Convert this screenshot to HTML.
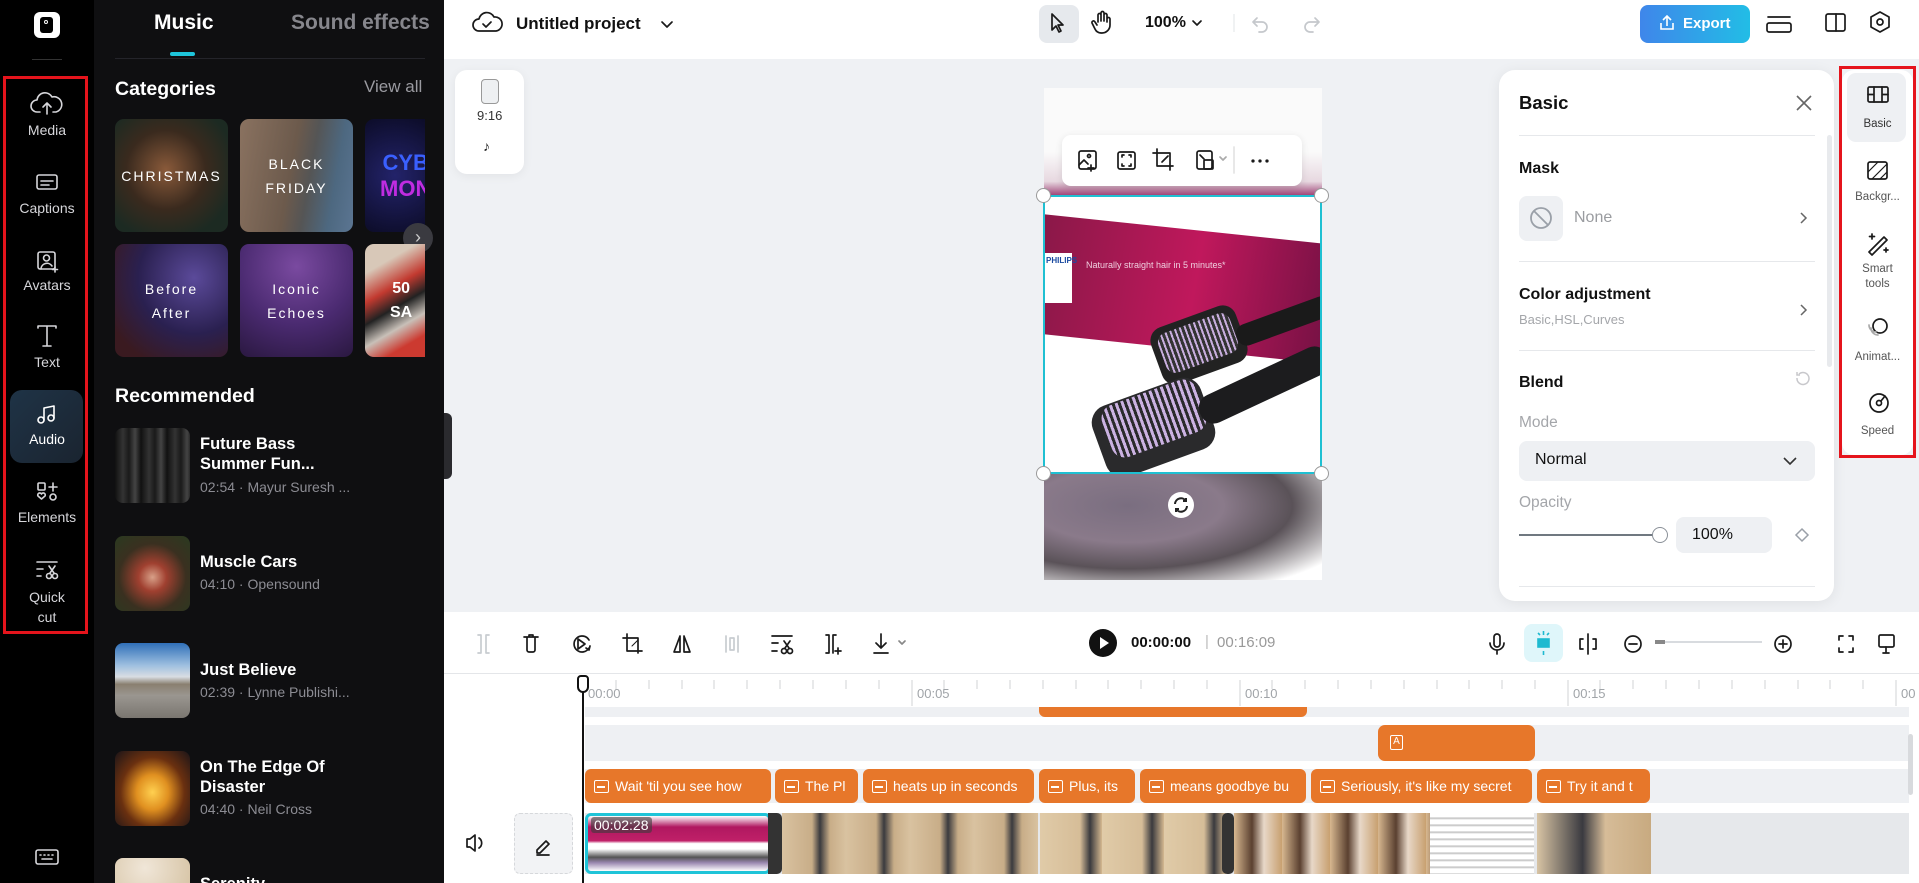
<!DOCTYPE html>
<html style="width:1919px;height:883px;overflow:hidden"><head><meta charset="utf-8">
<style>
*{margin:0;padding:0;box-sizing:border-box}
body{width:1919px;height:883px;overflow:hidden;position:relative;font-family:"Liberation Sans",sans-serif;background:#eff1f4}
.a{position:absolute}
svg{position:absolute;overflow:visible}
.ri{position:absolute;left:0;width:94px;text-align:center;color:#d6d6da;font-size:14px}
.tile{position:absolute;border-radius:9px;overflow:hidden;color:#fff;font-size:14px;letter-spacing:2px;display:flex;align-items:center;justify-content:center;text-align:center;line-height:24px}
.th{position:absolute;left:115px;width:75px;height:75px;border-radius:8px;overflow:hidden}
.tt{position:absolute;left:200px;color:#fff;font-size:16.5px;font-weight:bold;line-height:20px}
.tm{position:absolute;left:200px;color:#8c8c93;font-size:14px}
.pl{position:absolute;left:1519px;font-size:16px;font-weight:bold;color:#111}
.dv{position:absolute;left:1519px;width:296px;height:1px;background:#e6e8eb}
.tab{position:absolute;left:1842px;width:71px;text-align:center;font-size:11.5px;color:#333;line-height:15px}
.cap{position:absolute;top:769px;height:34px;background:#e7772a;border-radius:6px;color:#fff;font-size:14px;line-height:34px;white-space:nowrap;overflow:hidden;padding-left:30px}
.cap:before{content:"";position:absolute;left:9px;top:11px;width:13px;height:11px;border:1.5px solid #fff;border-radius:2px}
.cap:after{content:"";position:absolute;left:12px;top:17px;width:8px;height:1.5px;background:#fff}
.ic{stroke:#1a1a1a;fill:none;stroke-width:1.7;stroke-linecap:round;stroke-linejoin:round}
#clip{position:absolute;left:0;top:0;width:1919px;height:883px;overflow:hidden}
</style></head><body><div id="clip">

<!-- left rail -->
<div class="a" style="left:0;top:0;width:94px;height:883px;background:#000"></div>
<div class="a" style="left:34px;top:12px;width:26px;height:26px;background:#fff;border-radius:6px"></div>
<div class="a" style="left:40px;top:17px;width:13px;height:16px;background:#000;border-radius:3px"></div>
<div class="a" style="left:44px;top:20px;width:4px;height:4px;border:1px solid #fff;border-radius:50%"></div>
<div class="a" style="left:32px;top:59px;width:30px;height:1px;background:#333"></div>
<div class="a" style="left:10px;top:390px;width:73px;height:73px;border-radius:12px;background:linear-gradient(135deg,#1f3346,#1a2430)"></div>
<div class="a" style="left:3px;top:76px;width:85px;height:558px;border:3px solid #e5141c"></div>
<svg width="94" height="883" style="left:0;top:0">
 <g stroke="#d6d6da" fill="none" stroke-width="1.6" stroke-linecap="round" stroke-linejoin="round">
  <path d="M40 112h-3a6 6 0 0 1 0-12 8 8 0 0 1 15-3 6 6 0 0 1 4 15h-3M47 114v-10M43 107l4-4 4 4"/>
  <rect x="37" y="175" width="20" height="14" rx="2"/><path d="M41 181h12M41 185h8"/>
  <rect x="38" y="252" width="17" height="17" rx="2"/><circle cx="46.5" cy="258" r="3"/><path d="M41 269a6 6 0 0 1 11-3"/><path d="M55 267v5M52.5 269.5h5"/>
  <path d="M38 328v-2h18v2M47 326v20M43 346h8"/>
  <g stroke="#fff"><path d="M44 420v-12l10-2v12"/><circle cx="41" cy="420" r="3"/><circle cx="51" cy="418" r="3"/></g>
  <rect x="38" y="483" width="7" height="7" rx="1"/><path d="M53 483v8M49 487h8"/><path d="M41.5 499l-3.5-3a2 2 0 0 1 3.5-2 2 2 0 0 1 3.5 2z"/><circle cx="53" cy="497" r="3"/>
  <path d="M37 562h20M37 569h6M37 576h4"/><circle cx="49" cy="576" r="2.5"/><circle cx="55" cy="576" r="2.5"/><path d="M50 573l5-7M54 573l-5-7"/>
  <rect x="36" y="850" width="22" height="14" rx="2"/><path d="M40 855h1M44 855h1M48 855h1M52 855h1M42 859h10"/>
 </g>
</svg>
<div class="ri" style="top:122px">Media</div>
<div class="ri" style="top:200px">Captions</div>
<div class="ri" style="top:277px">Avatars</div>
<div class="ri" style="top:354px">Text</div>
<div class="ri" style="top:431px;color:#fff">Audio</div>
<div class="ri" style="top:509px">Elements</div>
<div class="ri" style="top:587px;line-height:20px">Quick<br>cut</div>

<!-- music panel -->
<div class="a" style="left:94px;top:0;width:350px;height:883px;background:#0f0f11;overflow:hidden">
<div class="a" style="left:60px;top:11px;font-size:21px;font-weight:bold;color:#fff">Music</div>
<div class="a" style="left:197px;top:11px;font-size:21px;font-weight:bold;color:#86868c">Sound effects</div>
<div class="a" style="left:76px;top:52px;width:25px;height:4px;background:#1ec5db;border-radius:2px"></div>
<div class="a" style="left:21px;top:58px;width:310px;height:1px;background:#24242a"></div>
</div>
<div class="a" style="left:115px;top:78px;font-size:19.5px;font-weight:bold;color:#fff">Categories</div>
<div class="a" style="left:364px;top:77px;font-size:17px;color:#9a9aa0">View all</div>

<div class="tile" style="left:115px;top:119px;width:113px;height:113px;background:radial-gradient(circle at 45% 45%,#8a5a3a,#3a2a1e 45%,#1c2a22 80%)">CHRISTMAS</div>
<div class="tile" style="left:240px;top:119px;width:113px;height:113px;background:linear-gradient(100deg,#8a7260 0%,#6c5a4c 45%,#555 60%,#4d6880 80%,#5b7592)">BLACK<br>FRIDAY</div>
<div class="tile" style="left:365px;top:119px;width:60px;height:113px;border-radius:9px 0 0 9px;background:radial-gradient(circle at 50% 50%,#23236a,#0c0c28);justify-content:flex-start;padding-left:15px;font-size:22px;letter-spacing:0;line-height:26px;font-weight:bold"><span><span style="color:#3a60ff">CYB</span><br><span style="color:#c02ce0">MON</span></span></div>
<div class="a" style="left:403px;top:223px;width:30px;height:30px;border-radius:50%;background:#3a3a40;color:#ccc;font-size:18px;text-align:center;line-height:28px">›</div>
<div class="tile" style="left:115px;top:244px;width:113px;height:113px;background:radial-gradient(circle at 70% 30%,#5b4a9a,#2a2050 50%,#3a1a20 85%)">Before<br>After</div>
<div class="tile" style="left:240px;top:244px;width:113px;height:113px;background:radial-gradient(circle at 50% 20%,#7a4aa0,#4a2a70 55%,#2a1840)">Iconic<br>Echoes</div>
<div class="tile" style="left:365px;top:244px;width:60px;height:113px;border-radius:9px 0 0 9px;background:linear-gradient(150deg,#d8c8b8 20%,#c23a30 40%,#222 55%,#c8c0b8 70%,#cc3a30 85%);justify-content:flex-start;padding-left:25px;font-weight:bold;font-size:16px;letter-spacing:0">50<br>SA</div>

<div class="a" style="left:115px;top:385px;font-size:19.5px;font-weight:bold;color:#fff">Recommended</div>
<div class="th" style="top:428px;background:repeating-linear-gradient(90deg,#111 0,#333 8px,#1a1a1a 14px,#444 20px,#111 26px)"></div>
<div class="tt" style="top:434px">Future Bass<br>Summer Fun...</div>
<div class="tm" style="top:479px">02:54 · Mayur Suresh ...</div>
<div class="th" style="top:536px;background:radial-gradient(circle at 50% 55%,#d8a088 0,#a04030 25%,#3a3020 60%,#2a3a20)"></div>
<div class="tt" style="top:552px">Muscle Cars</div>
<div class="tm" style="top:576px">04:10 · Opensound</div>
<div class="th" style="top:643px;background:linear-gradient(180deg,#2f6fb8 0%,#9fc0e0 30%,#d8dde2 45%,#8a8070 55%,#9a9690 70%,#7a7670)"></div>
<div class="tt" style="top:660px">Just Believe</div>
<div class="tm" style="top:684px">02:39 · Lynne Publishi...</div>
<div class="th" style="top:751px;background:radial-gradient(ellipse at 50% 55%,#ffd050 0,#e09020 30%,#6a3010 60%,#1a1418)"></div>
<div class="tt" style="top:757px">On The Edge Of<br>Disaster</div>
<div class="tm" style="top:801px">04:40 · Neil Cross</div>
<div class="th" style="top:858px;height:25px;border-radius:8px 8px 0 0;background:radial-gradient(circle at 40% 40%,#f0e6d8,#d8c6a8)"></div>
<div class="tt" style="top:874px;height:9px;overflow:hidden">Serenity</div>
<div class="a" style="left:444px;top:413px;width:8px;height:66px;background:#2a2a2e;border-radius:0 6px 6px 0"></div>

<!-- top bar -->
<div class="a" style="left:444px;top:0;width:1475px;height:59px;background:#fff"></div>
<div class="a" style="left:1039px;top:5px;width:40px;height:38px;border-radius:8px;background:#e6e9ed"></div>
<svg width="1919" height="59" style="left:0;top:0">
 <g class="ic">
  <path d="M481 31h-2a6 6 0 0 1 0-12 8 8 0 0 1 15-2 6 6 0 0 1 2 14h-14z"/><path d="M483 24l3 3 5-5"/>
  <path d="M662 22l5 5 5-5"/>
  <path d="M1052 14l0 16 4-4 3 6 2-1-3-6h5z"/>
  <path d="M1098 22v-7a1.5 1.5 0 0 1 3 0v6M1101 20v-7a1.5 1.5 0 0 1 3 0v8M1104 21v-6a1.5 1.5 0 0 1 3 0v7M1107 22v-3a1.5 1.5 0 0 1 3 0v6a8 8 0 0 1-8 8h-1a7 7 0 0 1-6-4l-3-6a1.5 1.5 0 0 1 3-1l2 3"/>
  <path d="M1193 21l4 4 4-4"/>
  <g stroke="#c5c8cc"><path d="M1257 18l-4 4 4 4M1253 22h9a5 5 0 0 1 0 10h-3"/><path d="M1315 18l4 4-4 4M1319 22h-9a5 5 0 0 0 0 10h3"/></g>
  <path d="M1768 17h22M1769 23h20a2 2 0 0 1 2 2v5a2 2 0 0 1-2 2h-20a2 2 0 0 1-2-2v-5a2 2 0 0 1 2-2z"/>
  <rect x="1826" y="14" width="19" height="17" rx="2"/><path d="M1836 14v17"/>
  <path d="M1880 12l9 5v10l-9 5-9-5v-10z"/><circle cx="1880" cy="22" r="3"/>
 </g>
 <line x1="1234" y1="14" x2="1234" y2="32" stroke="#e2e4e7"/>
</svg>
<div class="a" style="left:516px;top:14px;font-size:17px;font-weight:bold;color:#111">Untitled project</div>
<div class="a" style="left:1145px;top:14px;font-size:16px;font-weight:bold;color:#111">100%</div>
<div class="a" style="left:1640px;top:5px;width:110px;height:38px;border-radius:8px;background:linear-gradient(90deg,#3f86ea,#22bde6);color:#fff;font-weight:bold;font-size:15px;line-height:38px;padding-left:43px">Export</div>
<svg width="20" height="20" style="left:1658px;top:13px"><g stroke="#fff" fill="none" stroke-width="1.6"><path d="M3 10v6h12v-6M9 13V3M5 7l4-4 4 4"/></g></svg>

<!-- canvas -->
<div class="a" style="left:455px;top:70px;width:69px;height:104px;background:#fff;border-radius:12px;box-shadow:0 2px 10px rgba(0,0,0,.06)"></div>
<div class="a" style="left:481px;top:79px;width:18px;height:25px;border:1.5px solid #999;border-radius:4px;background:#eef0f2"></div>
<div class="a" style="left:477px;top:108px;font-size:13px;color:#333">9:16</div>
<div class="a" style="left:483px;top:138px;font-size:14px;color:#222">♪</div>

<div class="a" style="left:1044px;top:88px;width:278px;height:492px;background:linear-gradient(180deg,#fafafa 0,#fafafa 13%,#e7d8e0 19%,#9a3a70 22%,#fff 22%)"></div>
<div class="a" style="left:1044px;top:474px;width:278px;height:106px;background:radial-gradient(ellipse at 30% 30%,#7a6e80 0,#8a7a8a 35%,#5a5258 60%,#fff 90%)"></div>
<div class="a" style="left:1044px;top:195px;width:278px;height:279px;background:#fff;overflow:hidden">
 <div class="a" style="left:0;top:35px;width:300px;height:120px;background:linear-gradient(100deg,#8a1848,#c0185c 50%,#6a1040);transform:skewY(6deg)"></div>
 <div class="a" style="left:0;top:58px;width:28px;height:50px;background:#fff"></div>
 <div class="a" style="left:2px;top:61px;font-size:8px;font-weight:bold;color:#1a4aa0">PHILIPS</div>
 <div class="a" style="left:42px;top:65px;font-size:9px;color:#f0d0e0">Naturally straight hair in 5 minutes*</div>
 <div class="a" style="left:110px;top:120px;width:90px;height:60px;background:#222;border-radius:14px;transform:rotate(-20deg)"></div>
 <div class="a" style="left:116px;top:127px;width:76px;height:42px;background:repeating-linear-gradient(90deg,#c8aede 0,#c8aede 2px,#333 2px,#333 5px);border-radius:10px;transform:rotate(-20deg)"></div>
 <div class="a" style="left:190px;top:115px;width:100px;height:22px;background:#1a1a1a;border-radius:10px;transform:rotate(-20deg)"></div>
 <div class="a" style="left:52px;top:195px;width:115px;height:75px;background:#2a2a2c;border-radius:18px;transform:rotate(-20deg)"></div>
 <div class="a" style="left:60px;top:196px;width:100px;height:55px;background:repeating-linear-gradient(90deg,#cbb2e2 0,#cbb2e2 3px,#2a2a2c 3px,#2a2a2c 6px);border-radius:14px;transform:rotate(-20deg)"></div>
 <div class="a" style="left:150px;top:175px;width:140px;height:30px;background:#1c1c1e;border-radius:14px;transform:rotate(-25deg)"></div>
</div>
<div class="a" style="left:1043px;top:195px;width:279px;height:279px;border:2px solid #1fc0d2"></div>
<div class="a" style="left:1036px;top:188px;width:15px;height:15px;border-radius:50%;background:#fff;border:1px solid #999"></div>
<div class="a" style="left:1314px;top:188px;width:15px;height:15px;border-radius:50%;background:#fff;border:1px solid #999"></div>
<div class="a" style="left:1036px;top:466px;width:15px;height:15px;border-radius:50%;background:#fff;border:1px solid #999"></div>
<div class="a" style="left:1314px;top:466px;width:15px;height:15px;border-radius:50%;background:#fff;border:1px solid #999"></div>
<div class="a" style="left:1168px;top:492px;width:26px;height:26px;border-radius:50%;background:#fff"></div>
<svg width="26" height="26" style="left:1168px;top:492px"><g stroke="#222" fill="none" stroke-width="2"><path d="M7 12a6 6 0 0 1 11-3M19 14a6 6 0 0 1-11 3"/><path d="M18 6v3h-3M8 20v-3h3"/></g></svg>

<div class="a" style="left:1062px;top:135px;width:240px;height:51px;background:#fff;border-radius:9px;box-shadow:0 2px 8px rgba(0,0,0,.1)"></div>
<svg width="240" height="51" style="left:1062px;top:135px"><g class="ic">
 <rect x="17" y="16" width="17" height="18" rx="2"/><path d="M17 30l5-5 4 4M29 30v6M26 33h6"/><circle cx="27" cy="21" r="1.5"/>
 <rect x="56" y="17" width="17" height="17" rx="2"/><path d="M60 22v-2h2M69 22v-2h-2M60 29v2h2M69 29v2h-2"/>
 <path d="M95 14v17h16M91 18h17v17"/><path d="M100 27l6-6"/>
 <rect x="135" y="16" width="15" height="18" rx="2"/><rect x="142" y="25" width="9" height="9" rx="1"/><path d="M138 20l4 4"/>
 <path d="M158 22l3 3 3-3" stroke="#aaa"/>
 <line x1="172" y1="12" x2="172" y2="38" stroke="#e4e4e4"/>
 <circle cx="191" cy="26" r=".8" fill="#222"/><circle cx="198" cy="26" r=".8" fill="#222"/><circle cx="205" cy="26" r=".8" fill="#222"/>
</g></svg>

<!-- properties panel -->
<div class="a" style="left:1499px;top:70px;width:335px;height:531px;background:#fff;border-radius:16px;box-shadow:0 2px 14px rgba(0,0,0,.07)"></div>
<div class="pl" style="top:92px;font-size:18.5px">Basic</div>
<svg width="20" height="20" style="left:1794px;top:93px"><path d="M3 3l14 14M17 3L3 17" stroke="#666" stroke-width="1.6"/></svg>
<div class="dv" style="top:135px"></div>
<div class="pl" style="top:160px">Mask</div>
<div class="a" style="left:1519px;top:196px;width:44px;height:45px;background:#eef0f3;border-radius:8px"></div>
<svg width="44" height="45" style="left:1519px;top:196px"><g stroke="#9aa0a8" fill="none" stroke-width="1.8"><circle cx="22" cy="22" r="10"/><path d="M15 15l14 14"/></g></svg>
<div class="a" style="left:1574px;top:209px;font-size:16px;color:#9a9ca0">None</div>
<svg width="1919" height="600" style="left:0;top:0"><g stroke="#666" fill="none" stroke-width="1.5">
 <path d="M1801 213l5 5-5 5M1801 305l5 5-5 5"/>
 <path d="M1794 462l6 6 6-6" stroke="#333"/>
 <path d="M1797 378a6 6 0 1 0 2-4" stroke="#c8c8cc"/><path d="M1797 372v3h3" stroke="#c8c8cc"/>
 <path d="M1802 529l6 6-6 6-6-6z" stroke="#9aa0a8"/>
</g></svg>
<div class="dv" style="top:261px"></div>
<div class="pl" style="top:286px">Color adjustment</div>
<div class="a" style="left:1519px;top:312px;font-size:13px;color:#a4a6aa">Basic,HSL,Curves</div>
<div class="dv" style="top:350px"></div>
<div class="pl" style="top:374px">Blend</div>
<div class="a" style="left:1519px;top:414px;font-size:15.5px;color:#a4a6aa">Mode</div>
<div class="a" style="left:1519px;top:441px;width:296px;height:40px;background:#eef0f3;border-radius:8px"></div>
<svg width="20" height="20" style="left:1780px;top:451px"><path d="M4 7l6 6 6-6" stroke="#333" stroke-width="1.6" fill="none"/></svg>
<div class="a" style="left:1535px;top:451px;font-size:16px;color:#111">Normal</div>
<div class="a" style="left:1519px;top:494px;font-size:15.5px;color:#a4a6aa">Opacity</div>
<div class="a" style="left:1519px;top:534px;width:141px;height:2px;background:#707880"></div>
<div class="a" style="left:1652px;top:527px;width:16px;height:16px;border-radius:50%;background:#fff;border:1px solid #8a9098"></div>
<div class="a" style="left:1676px;top:517px;width:96px;height:36px;background:#eef0f3;border-radius:8px;font-size:16px;color:#111;line-height:36px;padding-left:16px">100%</div>
<div class="dv" style="top:586px"></div>
<div class="a" style="left:1827px;top:135px;width:5px;height:232px;background:#e8eaed;border-radius:3px"></div>

<!-- right tabs -->
<div class="a" style="left:1842px;top:70px;width:71px;height:385px;background:#fff;border-radius:12px"></div>
<div class="a" style="left:1847px;top:73px;width:59px;height:69px;background:#eef0f3;border-radius:9px"></div>
<div class="a" style="left:1839px;top:66px;width:77px;height:392px;border:3px solid #e5141c"></div>
<svg width="80" height="400" style="left:1839px;top:66px"><g class="ic">
 <rect x="29" y="21" width="20" height="15" rx="1.5"/><path d="M35 21v15M43 21v15M29 28.5h6M43 28.5h6"/>
 <rect x="29" y="96" width="19" height="17" rx="2"/><path d="M29 106l10-10M33 113l15-15M41 113l7-7" stroke-width="1.2"/>
 <path d="M30 186l15-15 3 3-15 15z"/><path d="M33 168v5M30.5 170.5h5M47 182v4M45 184h4"/>
 <circle cx="41" cy="260" r="7"/><path d="M32 262a7 7 0 0 0 7 7M30 259a7 7 0 0 0 7 7" stroke="#aaa"/>
 <circle cx="40" cy="337" r="9"/><circle cx="40" cy="337" r="2.5"/><path d="M42 335l4-5"/>
</g></svg>
<div class="tab" style="top:117px">Basic</div>
<div class="tab" style="top:190px;color:#555">Backgr...</div>
<div class="tab" style="top:262px;color:#555">Smart<br>tools</div>
<div class="tab" style="top:350px;color:#555">Animat...</div>
<div class="tab" style="top:424px;color:#555">Speed</div>

<!-- timeline toolbar -->
<div class="a" style="left:444px;top:612px;width:1475px;height:271px;background:#fff"></div>
<div class="a" style="left:444px;top:673px;width:1475px;height:1px;background:#e4e6e9"></div>
<svg width="1919" height="80" style="left:0;top:612px"><g class="ic">
 <path d="M478 23h3v18h-3M489 23h-3v18h3" stroke="#c8ccd0"/>
 <path d="M524 25h14M527 25v13a2 2 0 0 0 2 2h4a2 2 0 0 0 2-2v-13M529 25v-2h4v2"/>
 <path d="M589 28a8 8 0 1 0 0 8"/><path d="M578 27l7 5-7 5z"/><path d="M586 36l3 2 1-4"/>
 <path d="M627 22v17h15M623 26h15v15"/><path d="M632 34l6-6" stroke-width="1"/>
 <path d="M680 24l-6 16h6zM684 24l6 16h-6z"/>
 <path d="M726 24v16M738 24v16M730 26v12h4v-12z" stroke="#c8ccd0"/>
 <path d="M772 24h20M772 31h6M772 39h5"/><circle cx="784" cy="39" r="2.5"/><circle cx="790" cy="39" r="2.5"/><path d="M785 36l5-7M789 36l-5-7"/>
 <path d="M826 23h3v18h-3M836 23h-3v18"/><path d="M838 36v6M835 39h6"/>
 <path d="M881 22v14M876 31l5 5 5-5M874 41h14"/><path d="M899 29l3 3 3-3" stroke="#888"/>
 <path d="M1497 22a3 3 0 0 1 3 3v7a3 3 0 0 1-6 0v-7a3 3 0 0 1 3-3zM1490 31a7 7 0 0 0 14 0M1497 38v4"/>
 <path d="M1588 22v20M1583 27h-3v10h3M1593 27h3v10h-3"/>
 <circle cx="1633" cy="32" r="8"/><path d="M1629 32h8"/>
 <circle cx="1783" cy="32" r="8"/><path d="M1779 32h8M1783 28v8"/>
 <path d="M1839 28v-4h4M1853 28v-4h-4M1839 36v4h4M1853 36v4h-4"/>
 <rect x="1879" y="23" width="15" height="12" rx="1.5"/><path d="M1886 35v5M1883 41h6"/>
</g></svg>
<div class="a" style="left:1524px;top:624px;width:39px;height:38px;background:#dff6fa;border-radius:8px"></div>
<svg width="39" height="38" style="left:1524px;top:624px"><g stroke="#1fbad0" stroke-width="1.6" fill="none"><rect x="14" y="15" width="11" height="8" fill="#1fbad0"/><path d="M19.5 7v4M19.5 27v4M14 9l2 2M25 9l-2 2"/></g></svg>
<div class="a" style="left:1655px;top:641px;width:107px;height:2px;background:#d8dbdf"></div>
<div class="a" style="left:1655px;top:640px;width:10px;height:4px;background:#888"></div>
<div class="a" style="left:1089px;top:629px;width:28px;height:28px;border-radius:50%;background:#111"></div>
<svg width="28" height="28" style="left:1089px;top:629px"><path d="M11 8l9 6-9 6z" fill="#fff"/></svg>
<div class="a" style="left:1131px;top:634px;font-size:15px;font-weight:bold;color:#111">00:00:00</div>
<div class="a" style="left:1205px;top:633px;font-size:15px;color:#bbb">|</div>
<div class="a" style="left:1217px;top:634px;font-size:15px;color:#999">00:16:09</div>

<!-- timeline -->
<svg width="1919" height="30" style="left:0;top:674px"><g stroke="#d0d3d6" stroke-width="1">
<path d="M616 6v9M649 6v9M682 6v9M714 6v9M747 6v9M780 6v9M813 6v9M846 6v9M879 6v9M944 6v9M977 6v9M1010 6v9M1043 6v9M1076 6v9M1108 6v9M1141 6v9M1174 6v9M1207 6v9M1272 6v9M1305 6v9M1338 6v9M1371 6v9M1404 6v9M1437 6v9M1469 6v9M1502 6v9M1535 6v9M1600 6v9M1633 6v9M1666 6v9M1699 6v9M1732 6v9M1765 6v9M1798 6v9M1830 6v9M1863 6v9"/>
<path d="M912 6v26M1240 6v26M1568 6v26M1896 6v26"/>
</g></svg>
<div class="a" style="left:588px;top:686px;font-size:13px;color:#a0a4a8">00:00</div>
<div class="a" style="left:917px;top:686px;font-size:13px;color:#a0a4a8">00:05</div>
<div class="a" style="left:1245px;top:686px;font-size:13px;color:#a0a4a8">00:10</div>
<div class="a" style="left:1573px;top:686px;font-size:13px;color:#a0a4a8">00:15</div>
<div class="a" style="left:1901px;top:686px;font-size:13px;color:#a0a4a8">00</div>

<div class="a" style="left:585px;top:707px;width:1324px;height:10px;background:#eef0f3"></div>
<div class="a" style="left:1039px;top:707px;width:268px;height:10px;background:#e7772a;border-radius:0 0 6px 6px"></div>
<div class="a" style="left:585px;top:725px;width:1324px;height:36px;background:#eef0f3"></div>
<div class="a" style="left:1378px;top:725px;width:157px;height:36px;background:#e7772a;border-radius:7px"></div>
<div class="a" style="left:1390px;top:735px;width:13px;height:15px;border:1.5px solid #fff;border-radius:2px;color:#fff;font-size:10px;text-align:center;line-height:12px">A</div>
<div class="a" style="left:585px;top:769px;width:1324px;height:34px;background:#eef0f3"></div>
<div class="cap" style="left:585px;width:186px">Wait 'til you see how</div>
<div class="cap" style="left:775px;width:83px">The Pl</div>
<div class="cap" style="left:863px;width:171px">heats up in seconds</div>
<div class="cap" style="left:1039px;width:96px">Plus, its</div>
<div class="cap" style="left:1140px;width:166px">means goodbye bu</div>
<div class="cap" style="left:1311px;width:221px">Seriously, it's like my secret</div>
<div class="cap" style="left:1537px;width:113px">Try it and t</div>

<div class="a" style="left:585px;top:813px;width:1324px;height:61px;background:#e6e8eb"></div>
<div class="a" style="left:585px;top:813px;width:186px;height:61px;background:linear-gradient(180deg,#fff 0,#b01860 20%,#c02068 45%,#fff 50%,#fff 60%,#555 75%,#9a88b0 85%,#fff);border:3px solid #1fc4d8;border-radius:6px"></div>
<div class="a" style="left:591px;top:817px;padding:0 3px;background:rgba(60,60,60,.6);color:#fff;font-size:14px;border-radius:3px">00:02:28</div>
<div class="a" style="left:768px;top:813px;width:14px;height:61px;background:#333;border-radius:0 5px 5px 0"></div>
<div class="a" style="left:782px;top:813px;width:256px;height:61px;background:repeating-linear-gradient(90deg,#d9c2a0 0,#c8ad88 30px,#3a3a3e 38px,#c8ad88 48px,#d9c2a0 64px)"></div>
<div class="a" style="left:1040px;top:813px;width:186px;height:61px;background:repeating-linear-gradient(90deg,#e0cba8 0,#d6bd98 40px,#3a3a3e 50px,#d4b890 62px)"></div>
<div class="a" style="left:1222px;top:813px;width:12px;height:61px;background:#333;border-radius:5px"></div>
<div class="a" style="left:1234px;top:813px;width:196px;height:61px;background:repeating-linear-gradient(90deg,#d8b890 0,#5a4030 18px,#e8d8c8 30px,#c8a070 48px)"></div>
<div class="a" style="left:1430px;top:813px;width:104px;height:61px;background:repeating-linear-gradient(180deg,#fff 0,#fff 4px,#bbb 5px,#fff 7px)"></div>
<div class="a" style="left:1537px;top:813px;width:114px;height:61px;background:linear-gradient(90deg,#d8c4a4,#3a3a40 40%,#d6bc98 60%,#c8aa80)"></div>
<div class="a" style="left:1908px;top:734px;width:5px;height:61px;background:#d8dadd;border-radius:3px"></div>

<div class="a" style="left:514px;top:813px;width:59px;height:61px;background:#f2f3f5;border:1px dashed #d6d8db;border-radius:6px"></div>
<svg width="1919" height="883" style="left:0;top:0"><g class="ic">
 <path d="M467 839h3l5-4v16l-5-4h-3zM479 838a6 6 0 0 1 0 10"/>
 <path d="M537 850l9-9 3 3-9 9h-3zM537 855h12"/>
</g></svg>
<div class="a" style="left:582px;top:677px;width:2px;height:206px;background:#111"></div>
<div class="a" style="left:577px;top:675px;width:12px;height:18px;border:2px solid #111;border-radius:4px 4px 6px 6px;background:#fff"></div>
</div></body></html>
